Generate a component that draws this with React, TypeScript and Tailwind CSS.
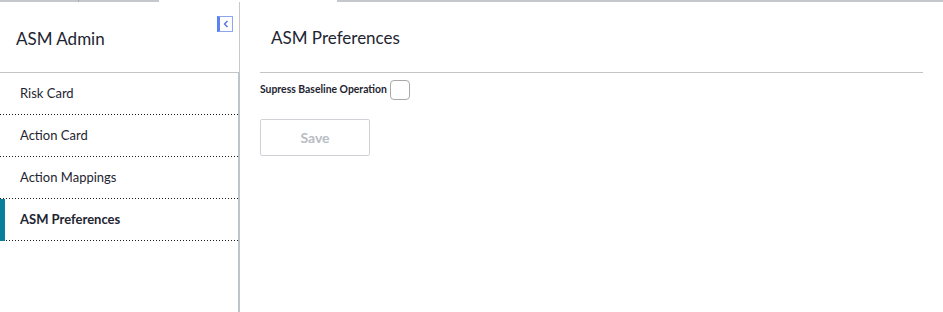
export default function App() {
  const items = ["Risk Card", "Action Card", "Action Mappings", "ASM Preferences"];
  const active = "ASM Preferences";

  return (
    <div className="w-[943px] h-[312px] bg-white flex flex-col overflow-hidden text-[#1e2531]" style={{ fontFamily: "Lato, 'Noto Sans', sans-serif" }}>
      {/* tab strip remnant */}
      <div className="flex h-[2px] shrink-0">
        <div className="w-[79px] bg-[#c4c7cb] border-r border-[#a9adb2]" />
        <div className="w-[80px] bg-[#c4c7cb]" />
        <div className="w-[178px] bg-white" />
        <div className="flex-1 bg-[#c4c7cb]" />
      </div>

      <div className="flex flex-1 min-h-0">
        {/* sidebar */}
        <aside className="w-[240px] shrink-0 flex flex-col">
          <div className="relative h-[70px] border-r border-[#c9c9c9] flex items-center pl-4">
            <span className="text-[17px] leading-none mt-[2px]">ASM Admin</span>
            <button className="absolute top-[14px] right-[6px] w-[16px] h-[16px] border border-[#8aa6f0] border-l-[3px] border-l-[#5b82ee] bg-white flex items-center justify-center">
              <svg width="6" height="8" viewBox="0 0 6 8">
                <path d="M4.5 1 L1.5 4 L4.5 7" fill="none" stroke="#5b6fe0" strokeWidth="1.4" />
              </svg>
            </button>
          </div>
          <div className="flex-1 border-t border-[#c4c4c4] border-r-2 border-r-[#bcc4cc] flex flex-col">
            {items.map((it) => (
              <div key={it} className="relative h-[42px] flex flex-col">
                {it === active && <div className="absolute left-0 top-0 bottom-0 w-[5px] bg-[#0b7e9b]" />}
                <div className={`flex-1 flex items-center pl-5 text-[13px] ${it === active ? "font-bold" : ""}`}>{it}</div>
                <div className="h-px bg-[linear-gradient(to_right,#1a1a1a_1px,transparent_1px)] bg-[length:3px_1px] bg-repeat-x" />
              </div>
            ))}
          </div>
        </aside>

        {/* content */}
        <main className="flex-1 flex flex-col pl-5 pr-5">
          <div className="h-[71px] border-b border-[#c4c4c4] flex items-center pl-[11px]">
            <span className="text-[17px] leading-none mt-[1px]">ASM Preferences</span>
          </div>
          <div className="flex items-center gap-[3px] mt-[7px]">
            <span className="text-[10.4px] font-bold">Supress Baseline Operation</span>
            <span className="w-[20px] h-[20px] rounded-[4px] border border-[#a9a9a9] bg-white" />
          </div>
          <button className="mt-[19px] w-[110px] h-[37px] border border-[#cfd3d7] rounded-[2px] text-[14px] font-bold text-[#b7bdc3] bg-white">
            Save
          </button>
        </main>
      </div>
    </div>
  );
}
